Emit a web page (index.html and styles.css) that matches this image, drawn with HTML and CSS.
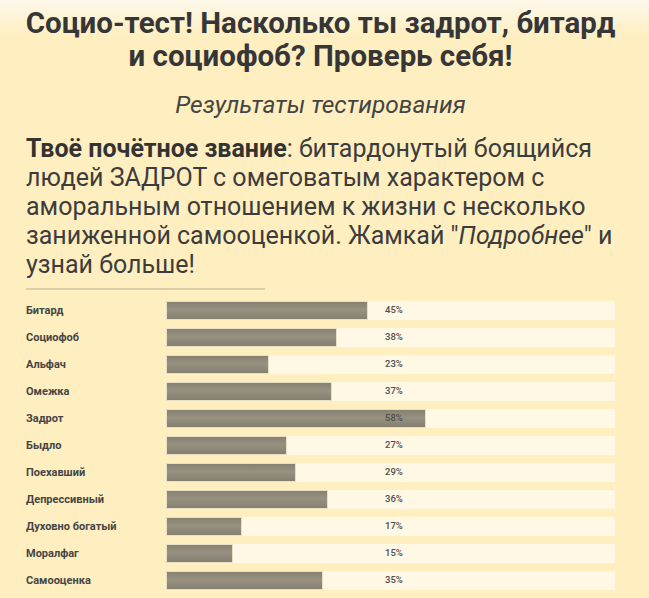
FILE: index.html
```html
<!DOCTYPE html>
<html lang="ru">
<head>
<meta charset="utf-8">
<title>Социо-тест</title>
<link rel="stylesheet" href="styles.css">
</head>
<body>
<div class="page">
  <h1 class="title">Социо-тест! Насколько ты задрот, битард и социофоб? Проверь себя!</h1>
  <div class="subtitle">Результаты тестирования</div>
  <p class="result"><b>Твоё почётное звание</b>: битардонутый боящийся людей ЗАДРОТ с омеговатым характером с аморальным отношением к жизни с несколько заниженной самооценкой. Жамкай "<i>Подробнее</i>" и узнай больше!</p>
  <div class="divider"></div>
  <div class="stats">
    <div class="row"><div class="label">Битард</div><div class="track"><div class="fill" style="width:45%"></div><span class="pct">45%</span></div></div>
    <div class="row"><div class="label">Социофоб</div><div class="track"><div class="fill" style="width:38%"></div><span class="pct">38%</span></div></div>
    <div class="row"><div class="label">Альфач</div><div class="track"><div class="fill" style="width:23%"></div><span class="pct">23%</span></div></div>
    <div class="row"><div class="label">Омежка</div><div class="track"><div class="fill" style="width:37%"></div><span class="pct">37%</span></div></div>
    <div class="row"><div class="label">Задрот</div><div class="track"><div class="fill" style="width:58%"></div><span class="pct">58%</span></div></div>
    <div class="row"><div class="label">Быдло</div><div class="track"><div class="fill" style="width:27%"></div><span class="pct">27%</span></div></div>
    <div class="row"><div class="label">Поехавший</div><div class="track"><div class="fill" style="width:29%"></div><span class="pct">29%</span></div></div>
    <div class="row"><div class="label">Депрессивный</div><div class="track"><div class="fill" style="width:36%"></div><span class="pct">36%</span></div></div>
    <div class="row"><div class="label">Духовно богатый</div><div class="track"><div class="fill" style="width:17%"></div><span class="pct">17%</span></div></div>
    <div class="row"><div class="label">Моралфаг</div><div class="track"><div class="fill" style="width:15%"></div><span class="pct">15%</span></div></div>
    <div class="row"><div class="label">Самооценка</div><div class="track"><div class="fill" style="width:35%"></div><span class="pct">35%</span></div></div>
  </div>
</div>
</body>
</html>
```
FILE: styles.css
```css
html, body {
  margin: 0;
  padding: 0;
}
body {
  background-color: #ffeec0;
  background-image: linear-gradient(to bottom, #fdf8ea 0px, #fef2d2 22px, #ffeec0 36px);
  background-repeat: no-repeat;
  font-family: Roboto, "Liberation Sans", sans-serif;
  color: #3a3a3a;
  height: 598px;
  overflow: hidden;
}
.page {
  padding: 7px 34px 0 26px;
}
.title {
  margin: 0 -4px;
  font-size: 29.5px;
  line-height: 33px;
  font-weight: 700;
  text-align: center;
  color: #363636;
}
.subtitle {
  margin-top: 18px;
  font-size: 24.5px;
  line-height: 28px;
  font-style: italic;
  font-weight: 400;
  text-align: center;
  color: #444;
}
.result {
  margin: 15px -6px 0 0;
  font-size: 25px;
  line-height: 29px;
  color: #3c3c3c;
}
.result b {
  font-weight: 700;
  color: #333;
}
.divider {
  margin-top: 9px;
  width: 239px;
  height: 2px;
  background: #ddd0a8;
}
.stats {
  margin-top: 11px;
  display: flex;
  flex-direction: column;
  gap: 8px;
}
.row {
  display: grid;
  grid-template-columns: 140px 449px;
  align-items: center;
  height: 19px;
}
.label {
  font-size: 11px;
  font-weight: 700;
  color: #454545;
}
.track {
  position: relative;
  height: 19px;
  background: #fff8e4;
}
.fill {
  box-sizing: border-box;
  height: 19px;
  border: 1px solid #e8dfc4;
  background: linear-gradient(to bottom, #878172 0%, #979182 45%, #8f8979 70%, #848070 100%);
}
.pct {
  position: absolute;
  left: 219px;
  top: 4px;
  font-size: 9.5px;
  line-height: 10px;
  font-weight: 500;
  color: #4e4e4e;
}
```
